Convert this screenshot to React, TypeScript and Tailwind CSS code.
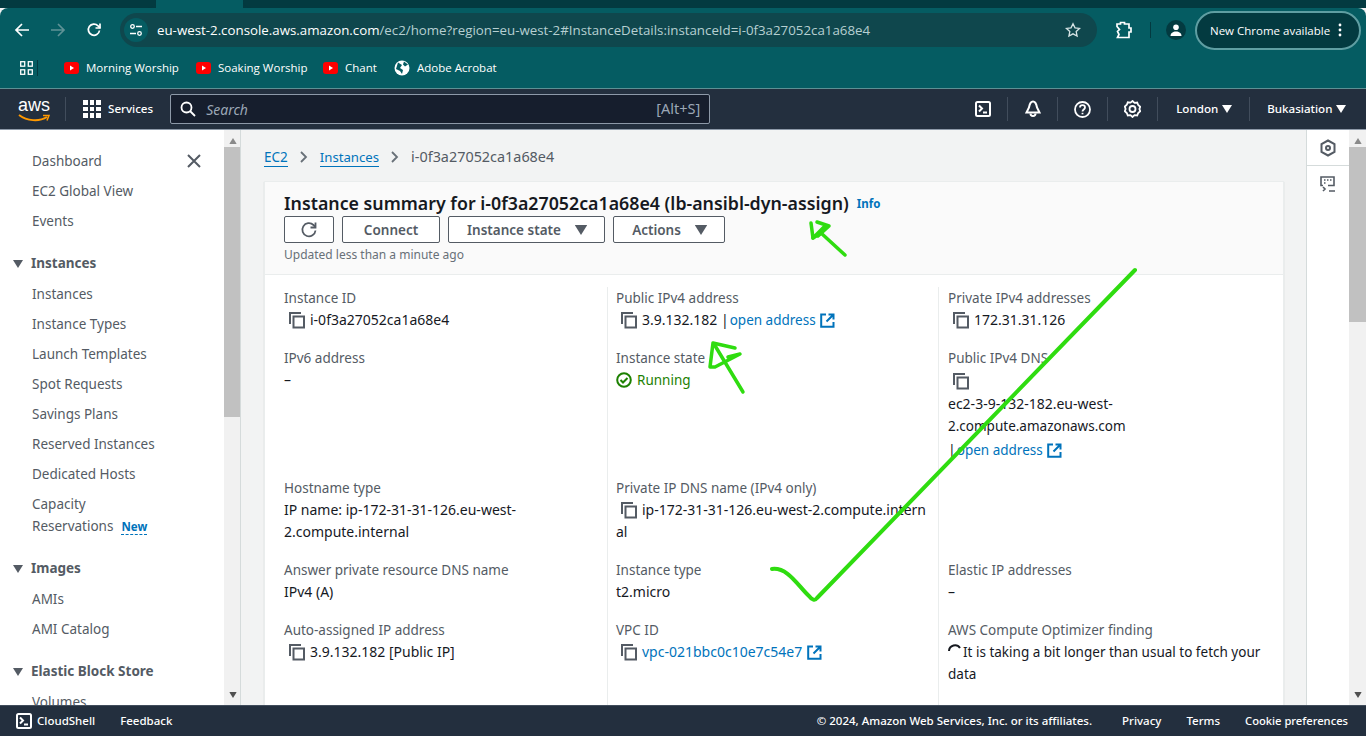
import type { ReactNode } from "react";

const ui = "font-['Noto_Sans','Open_Sans',sans-serif]";
const chrome = "font-['Open_Sans',sans-serif]";

function CopyIcon() {
  return (
    <svg width="18" height="18" viewBox="0 0 18 18" fill="none" stroke="#545b64" strokeWidth="2" className="shrink-0">
      <path d="M2 13V2h11" />
      <rect x="5.5" y="5.5" width="10.5" height="11" />
    </svg>
  );
}

function ExternalIcon() {
  return (
    <svg width="15" height="15" viewBox="0 0 15 15" fill="none" stroke="#0073bb" strokeWidth="2" className="inline-block shrink-0">
      <path d="M6 1.5H1.2v12.3h12.3V9" />
      <path d="M6.5 8.5 13 2M8.5 1.5h5v5" />
    </svg>
  );
}

function Caret({ className = "" }: { className?: string }) {
  return (
    <svg width="10" height="8" viewBox="0 0 10 8" className={className} fill="currentColor">
      <path d="M0 0h10L5 8z" />
    </svg>
  );
}

function YouTube() {
  return (
    <svg width="15" height="12" viewBox="0 0 15 12" className="shrink-0">
      <rect width="15" height="12" rx="3" fill="#f00" />
      <path d="M6 3.500v5l4-2.500z" fill="#fff" />
    </svg>
  );
}

function Bookmark({ label, icon, w }: { label: string; icon: ReactNode; w: string }) {
  return (
    <div className={`flex items-center gap-[7px] ${w}`}>
      {icon}
      <span className="whitespace-nowrap text-[11.5px] text-white">{label}</span>
    </div>
  );
}

function BrowserBar() {
  return (
    <div className={`${chrome} shrink-0`}>
      <div className="flex h-2 bg-[#033a40]">
        <div className="w-[156px] rounded-br-lg bg-[#033a40]" />
        <div className="w-[87px] bg-[#055c62]" />
        <div className="flex-1 rounded-bl-lg bg-[#033a40]" />
      </div>
      <div className="flex h-[44px] items-center rounded-t-lg bg-[#055c62] pl-[14px] pr-1">
        <svg width="16" height="16" viewBox="0 0 16 16" fill="none" stroke="#fff" strokeWidth="1.7" className="mr-5">
          <path d="M15 8H2M8 2 2 8l6 6" />
        </svg>
        <svg width="16" height="16" viewBox="0 0 16 16" fill="none" stroke="#5f9296" strokeWidth="1.7" className="mr-5">
          <path d="M1 8h13M8 2l6 6-6 6" />
        </svg>
        <svg width="16" height="16" viewBox="0 0 16 16" fill="none" stroke="#fff" strokeWidth="1.7" className="mr-[18px]">
          <path d="M13.500 8.500A5.600 5.600 0 1 1 12 3.800L14 6" />
          <path d="M14 1.500V6H9.500" />
        </svg>
        <div className="flex h-[34px] w-[977px] items-center rounded-full bg-[#0f474d] pl-1 pr-4">
          <div className="flex h-[24px] w-[24px] items-center justify-center rounded-full bg-[#055c62]">
            <svg width="14" height="14" viewBox="0 0 14 14" fill="none" stroke="#fff" strokeWidth="1.3">
              <circle cx="3.500" cy="3.500" r="1.800" />
              <circle cx="10.500" cy="10.500" r="1.800" />
              <path d="M7 3.500h6M1 10.500h6" />
            </svg>
          </div>
          <span className="ml-[9px] flex-1 whitespace-nowrap pt-[2px] text-[13.3px] text-[#b6cfd1]">
            <span className="text-white">eu-west-2.console.aws.amazon.com</span>/ec2/home?region=eu-west-2#InstanceDetails:instanceId=i-0f3a27052ca1a68e4
          </span>
          <svg width="16" height="16" viewBox="0 0 24 24" fill="none" stroke="#d5e3e4" strokeWidth="2">
            <path d="m12 2.500 3 6.200 6.800.9-5 4.700 1.300 6.800-6.100-3.300-6.100 3.300 1.300-6.800-5-4.700 6.800-.9z" />
          </svg>
        </div>
        <svg width="18" height="18" viewBox="0 0 18 18" fill="none" stroke="#fff" strokeWidth="1.7" className="ml-[18px]">
          <path d="M2 3h3.500V1.500h4V3H14v4h2v4h-2v5.500H2.500l1.500-3-1.500-3 2-2-2.500-3z" />
        </svg>
        <div className="ml-[17px] h-[16px] w-px bg-[#033a40]" />
        <div className="ml-[15px] flex h-[20px] w-[20px] items-center justify-center rounded-full bg-[#033a40]">
          <svg width="12" height="12" viewBox="0 0 12 12" fill="#fff">
            <circle cx="6" cy="3.300" r="2.800" />
            <path d="M.5 12c0-3 2.500-4.500 5.500-4.500s5.500 1.500 5.500 4.500z" />
          </svg>
        </div>
        <div className="ml-[9px] flex h-[39px] w-[166px] items-center rounded-full border-2 border-[#5f9ea2] bg-[#033a40] pl-[13px]">
          <span className="whitespace-nowrap pt-[2px] text-[11.5px] text-white">New Chrome available</span>
          <svg width="4" height="14" viewBox="0 0 4 14" fill="#fff" className="ml-[8px]">
            <circle cx="2" cy="2" r="1.400" />
            <circle cx="2" cy="7" r="1.400" />
            <circle cx="2" cy="12" r="1.400" />
          </svg>
        </div>
      </div>
      <div className="flex h-[37px] items-center border-b border-[#5d9094] bg-[#055c62] pb-[5px] pl-5">
        <svg width="13" height="14" viewBox="0 0 13 14" fill="none" stroke="#fff" strokeWidth="1.300">
          <rect x=".7" y=".7" width="4" height="4.500" />
          <rect x="8.300" y=".7" width="4" height="4.500" />
          <rect x=".7" y="8.800" width="4" height="4.500" />
          <rect x="8.300" y="8.800" width="4" height="4.500" />
        </svg>
        <div className="ml-[4px] mr-[26px] h-[16px] w-px bg-[#033a40]" />
        <div className="flex items-center">
          <Bookmark label="Morning Worship" icon={<YouTube />} w="w-[132px]" />
          <Bookmark label="Soaking Worship" icon={<YouTube />} w="w-[127px]" />
          <Bookmark label="Chant" icon={<YouTube />} w="w-[71px]" />
          <Bookmark
            label="Adobe Acrobat"
            w="w-[120px]"
            icon={
              <svg width="16" height="16" viewBox="0 0 16 16" className="shrink-0">
                <circle cx="8" cy="8" r="7.500" fill="#fff" />
                <path d="M4 2.500 8 5 6 8l3 2-1 4-2-3-4-2zM10 1.500l4 3-3 2-2-2z" fill="#055c62" />
              </svg>
            }
          />
        </div>
      </div>
    </div>
  );
}

function NavDivider() {
  return <div className="h-[24px] w-px bg-[#414d5c]" />;
}

function NavIcon({ children }: { children: ReactNode }) {
  return <div className="flex w-[49px] justify-center">{children}</div>;
}

function AwsNav() {
  return (
    <div className={`${ui} flex h-[41px] shrink-0 items-center border-b border-[#8d99a8] bg-[#232f3e] text-white`}>
      <div className="relative ml-[18px] h-[30px] w-[32px]">
        <span className="absolute left-0 top-[-1px] font-['Liberation_Sans',sans-serif] text-[18px] leading-[24px]">aws</span>
        <svg width="32" height="9" viewBox="0 0 32 9" fill="none" className="absolute left-0 top-[20px]">
          <path d="M1 1c8 6 20 7 28 2" stroke="#ff9900" strokeWidth="2" />
          <path d="M25 1.500h6l-2 5" stroke="#ff9900" strokeWidth="1.500" />
        </svg>
      </div>
      <div className="ml-[15px] h-[24px] w-px bg-[#414d5c]" />
      <div className="ml-[17px] grid h-[18px] w-[18px] grid-cols-3 gap-[2px]">
        {Array.from({ length: 9 }).map((_, i) => (
          <div key={i} className="bg-white" />
        ))}
      </div>
      <span className="ml-[7px] text-[11.6px] font-medium">Services</span>
      <div className="ml-[17px] flex h-[30px] w-[540px] items-center rounded-[2px] border border-[#8d99a8] bg-[#161e2d] pl-[9px] pr-[9px]">
        <svg width="16" height="16" viewBox="0 0 16 16" fill="none" stroke="#fff" strokeWidth="1.800">
          <circle cx="6.500" cy="6.500" r="5" />
          <path d="m10 10 5 5" />
        </svg>
        <span className="ml-[10px] flex-1 text-[14px] italic text-[#9ba7b6]">Search</span>
        <span className="text-[14.5px] text-[#9ba7b6]">[Alt+S]</span>
      </div>
      <div className="ml-[248px] flex items-center">
        <NavIcon>
          <svg width="16" height="16" viewBox="0 0 16 16" fill="none" stroke="#fff" strokeWidth="2">
            <rect x="1" y="1" width="14" height="14" rx="1.500" />
            <path d="m4 4.500 3 3-3 3M8 11.500h4" />
          </svg>
        </NavIcon>
        <NavDivider />
        <NavIcon>
          <svg width="18" height="18" viewBox="0 0 18 18" fill="none" stroke="#fff" strokeWidth="2">
            <path d="M9 1.500c3 0 3.500 3.500 4 6l2.500 5h-13l2.500-5c.5-2.500 1-6 4-6z" />
            <path d="M6.500 13.500a2.500 2.500 0 0 0 5 0" />
          </svg>
        </NavIcon>
        <NavDivider />
        <NavIcon>
          <svg width="17" height="17" viewBox="0 0 17 17" fill="none" stroke="#fff" strokeWidth="1.800">
            <circle cx="8.500" cy="8.500" r="7.500" />
            <path d="M6 6.500C6 5 7 4.200 8.500 4.200S11 5.200 11 6.500c0 2-2.500 2-2.500 4" />
            <path d="M8.500 11.800v1.500" />
          </svg>
        </NavIcon>
        <NavDivider />
        <NavIcon>
          <svg width="17" height="18" viewBox="0 0 17 18" fill="none" stroke="#fff" strokeWidth="1.800">
            <path d="m8.500 1 2 1.800 2.700-.3 1 2.500 2 1.700-.8 2.300.8 2.300-2 1.700-1 2.500-2.700-.3-2 1.800-2-1.800-2.700.3-1-2.500-2-1.700.8-2.300L.8 6.500l2-1.700 1-2.500 2.700.3z" />
            <circle cx="8.500" cy="9" r="3" />
          </svg>
        </NavIcon>
        <NavDivider />
        <div className="flex w-[91px] items-center pl-[18px]">
          <span className="text-[11.6px] font-medium">London</span>
          <Caret className="ml-[4px]" />
        </div>
        <NavDivider />
        <div className="flex items-center pl-[17px]">
          <span className="text-[11.6px] font-medium">Bukasiation</span>
          <Caret className="ml-[4px]" />
        </div>
      </div>
    </div>
  );
}

function ScrollBar({ thumbTop, thumbH, className = "" }: { thumbTop: string; thumbH: string; className?: string }) {
  return (
    <div className={`relative shrink-0 bg-[#f1f1f1] ${className}`}>
      <Caret className="absolute left-[4px] top-[7px] rotate-180 scale-75 text-[#8a8a8a]" />
      <div className={`absolute inset-x-0 bg-[#c1c1c1] ${thumbTop} ${thumbH}`} />
      <Caret className="absolute bottom-[6px] left-[4px] scale-75 text-[#505050]" />
    </div>
  );
}

function SideItem({ children }: { children: ReactNode }) {
  return <div className="flex h-[30px] items-center pl-8 text-[13.5px] text-[#545b64]">{children}</div>;
}

function SideSection({ title, items }: { title: string; items: string[] }) {
  return (
    <div className="mt-3">
      <div className="flex h-[31px] items-center pl-[13px] text-[13.5px] font-bold text-[#545b64]">
        <Caret className="mr-[8px] text-[#545b64]" />
        {title}
      </div>
      {items.map((item) => (
        <SideItem key={item}>{item}</SideItem>
      ))}
    </div>
  );
}

function Sidebar() {
  return (
    <div className="relative w-[224px] shrink-0 overflow-hidden bg-white pt-4">
      <SideItem>Dashboard</SideItem>
      <SideItem>EC2 Global View</SideItem>
      <SideItem>Events</SideItem>
      <svg width="14" height="14" viewBox="0 0 14 14" fill="none" stroke="#545b64" strokeWidth="2" className="absolute left-[187px] top-[24px]">
        <path d="m1 1 12 12M13 1 1 13" />
      </svg>
      <SideSection
        title="Instances"
        items={["Instances", "Instance Types", "Launch Templates", "Spot Requests", "Savings Plans", "Reserved Instances", "Dedicated Hosts"]}
      />
      <div className="pb-[3px] pl-8 pt-[4px] text-[13.5px] leading-[22px] text-[#545b64]">
        <div>Capacity</div>
        <div>
          Reservations
          <span className="ml-[8px] border-b border-dashed border-[#0073bb] text-[11.5px] font-bold text-[#0073bb]">New</span>
        </div>
      </div>
      <SideSection title="Images" items={["AMIs", "AMI Catalog"]} />
      <SideSection title="Elastic Block Store" items={["Volumes"]} />
    </div>
  );
}

function Field({ label, children }: { label: string; children: ReactNode }) {
  return (
    <>
      <div className="text-[13.5px] leading-[22px] text-[#545b64]">{label}</div>
      <div className="text-[14px] leading-[22px] text-[#16191f]">{children}</div>
    </>
  );
}

function CopyValue({ children }: { children: ReactNode }) {
  return (
    <div className="flex items-center">
      <span className="ml-[4px] mr-[4px] flex h-[22px] items-center">
        <CopyIcon />
      </span>
      <span className="whitespace-nowrap">{children}</span>
    </div>
  );
}

function Cell({ children, last = false, first = false, className = "" }: { children?: ReactNode; last?: boolean; first?: boolean; className?: string }) {
  return (
    <div className={`${first ? "pl-[19px]" : last ? "pl-[9px]" : "pl-2"} ${last ? "" : "border-r border-[#eaeded]"} ${className}`}>
      {children}
    </div>
  );
}

function Link({ children }: { children: ReactNode }) {
  return <span className="ml-[1px] text-[13.5px] text-[#0073bb]">{children}</span>;
}

function ActionButton({ children, className = "" }: { children: ReactNode; className?: string }) {
  return (
    <div className={`flex h-[27px] items-center justify-center rounded-[2px] border border-[#545b64] bg-white pt-[1px] text-[13.5px] font-semibold text-[#545b64] ${className}`}>
      {children}
    </div>
  );
}

function Summary() {
  return (
    <div className="border border-[#eaeded] bg-white shadow-[0_1px_1px_0_rgba(0,28,36,0.2)]">
      <div className="h-[93px] border-b border-[#eaeded] bg-[#fafafa] pl-[19px] pt-[9px]">
        <div className="flex items-center">
          <span className="whitespace-nowrap text-[17.8px] font-semibold leading-[24px] text-[#16191f]">
            Instance summary for i-0f3a27052ca1a68e4 (lb-ansibl-dyn-assign)
          </span>
          <span className="ml-[8px] mt-[2px] text-[11.5px] font-bold text-[#0073bb]">Info</span>
        </div>
        <div className="mt-[1px] flex gap-2">
          <ActionButton className="w-[50px]">
            <svg width="18" height="18" viewBox="0 0 18 18" fill="none" stroke="#545b64" strokeWidth="1.800">
              <path d="M15.500 9.500A6.600 6.600 0 1 1 13.500 4L15.500 6" />
              <path d="M15.500 1.500V6.500H10.500" />
            </svg>
          </ActionButton>
          <ActionButton className="w-[98px]">Connect</ActionButton>
          <ActionButton className="w-[157px]">
            Instance state
            <Caret className="ml-[15px] scale-125" />
          </ActionButton>
          <ActionButton className="w-[112px]">
            Actions
            <Caret className="ml-[15px] scale-125" />
          </ActionButton>
        </div>
        <div className="mt-[3px] text-[12px] leading-[18px] text-[#687078]">Updated less than a minute ago</div>
      </div>
      <div className="grid grid-cols-[343px_331px_1fr] pt-3">
        <Cell first className="h-[60px]">
          <Field label="Instance ID">
            <CopyValue>i-0f3a27052ca1a68e4</CopyValue>
          </Field>
        </Cell>
        <Cell className="h-[60px]">
          <Field label="Public IPv4 address">
            <div className="flex items-center">
              <span className="ml-[4px] mr-[4px] flex h-[22px] items-center">
                <CopyIcon />
              </span>
              <span className="whitespace-nowrap">
                3.9.132.182 |<Link>open address</Link>
              </span>
              <span className="ml-[4px] flex items-center">
                <ExternalIcon />
              </span>
            </div>
          </Field>
        </Cell>
        <Cell last className="h-[60px]">
          <Field label="Private IPv4 addresses">
            <CopyValue>172.31.31.126</CopyValue>
          </Field>
        </Cell>

        <Cell first className="h-[130px]">
          <Field label="IPv6 address">–</Field>
        </Cell>
        <Cell className="h-[130px]">
          <div className="text-[13.5px] leading-[22px] text-[#545b64]">Instance state</div>
          <div className="flex items-center gap-[5px] text-[13.5px] leading-[22px] text-[#1d8102]">
            <svg width="16" height="16" viewBox="0 0 16 16" fill="none" stroke="#1d8102" strokeWidth="2">
              <circle cx="8" cy="8" r="6.800" />
              <path d="m4.500 8 2.500 2.500 4.500-4.500" />
            </svg>
            Running
          </div>
        </Cell>
        <Cell last className="h-[130px]">
          <div className="text-[13.5px] leading-[22px] text-[#545b64]">Public IPv4 DNS</div>
          <div className="ml-[4px] flex h-[24px] items-center">
            <CopyIcon />
          </div>
          <div className="text-[14px] leading-[22px] text-[#16191f]">ec2-3-9-132-182.eu-west-</div>
          <div className="text-[13.5px] leading-[22px] text-[#16191f]">2.compute.amazonaws.com</div>
          <div className="mt-[2px] flex items-center gap-[4px] text-[14px] leading-[22px] text-[#16191f]">
            <span>
              |<Link>open address</Link>
            </span>
            <ExternalIcon />
          </div>
        </Cell>

        <Cell first className="h-[82px]">
          <Field label="Hostname type">
            <div className="w-[260px]">IP name: ip-172-31-31-126.eu-west-2.compute.internal</div>
          </Field>
        </Cell>
        <Cell className="h-[82px]">
          <div className="text-[13.5px] leading-[22px] text-[#545b64]">Private IP DNS name (IPv4 only)</div>
          <div className="text-[14px] leading-[22px] text-[#16191f]">
            <CopyValue>ip-172-31-31-126.eu-west-2.compute.intern</CopyValue>
            al
          </div>
        </Cell>
        <Cell last className="h-[82px]" />

        <Cell first className="h-[60px]">
          <Field label="Answer private resource DNS name">IPv4 (A)</Field>
        </Cell>
        <Cell className="h-[60px]">
          <Field label="Instance type">t2.micro</Field>
        </Cell>
        <Cell last className="h-[60px]">
          <Field label="Elastic IP addresses">–</Field>
        </Cell>

        <Cell first className="h-[100px]">
          <Field label="Auto-assigned IP address">
            <CopyValue>3.9.132.182 [Public IP]</CopyValue>
          </Field>
        </Cell>
        <Cell className="h-[100px]">
          <Field label="VPC ID">
            <CopyValue>
              <span className="inline-flex items-center gap-[5px]">
                <span className="text-[14px] text-[#0073bb]">vpc-021bbc0c10e7c54e7</span>
                <ExternalIcon />
              </span>
            </CopyValue>
          </Field>
        </Cell>
        <Cell last className="h-[100px]">
          <div className="text-[13.5px] leading-[22px] text-[#545b64]">AWS Compute Optimizer finding</div>
          <div className="w-[320px] text-[13.5px] leading-[22px] text-[#16191f]">
            <svg width="15" height="14" viewBox="0 0 15 14" fill="none" stroke="#16191f" strokeWidth="2" className="inline-block align-[-1px]">
              <path d="M1 7a6 6 0 0 1 11-3" />
            </svg>
            It is taking a bit longer than usual to fetch your data
          </div>
        </Cell>
      </div>
    </div>
  );
}

function RightRail() {
  return (
    <div className="w-[43px] shrink-0 border-l border-[#d5dbdb] bg-white">
      <div className="flex h-[36px] items-center justify-center border-b border-[#d5dbdb]">
        <svg width="16" height="18" viewBox="0 0 16 18" fill="none" stroke="#545b64" strokeWidth="2">
          <path d="M8 1.500 14.500 5v8L8 16.500 1.500 13V5z" />
          <circle cx="8" cy="9" r="2" />
        </svg>
      </div>
      <div className="flex h-[36px] items-center justify-center">
        <svg width="16" height="16" viewBox="0 0 16 16" fill="none" stroke="#545b64" strokeWidth="1.600">
          <path d="M3 9.500H1V1h13v8.500H8" />
          <path d="M4 4h1.500M7 4h1.500M10 4h1.500M4 7h1.500" />
          <path d="m3 11 2 2-2 2M9 15h6" />
        </svg>
      </div>
    </div>
  );
}

function Footer() {
  return (
    <div className={`${ui} flex h-[31px] shrink-0 items-center border-t border-[#414d5c] bg-[#232f3e] pl-4 text-[11.5px] font-medium text-white`}>
      <svg width="16" height="16" viewBox="0 0 16 16" fill="none" stroke="#fff" strokeWidth="2">
        <rect x="1" y="1" width="14" height="14" rx="1.500" />
        <path d="m4 4.500 3 3-3 3M8 11.500h4" />
      </svg>
      <span className="ml-[5px]">CloudShell</span>
      <span className="ml-[25px]">Feedback</span>
      <span className="ml-auto">© 2024, Amazon Web Services, Inc. or its affiliates.</span>
      <span className="ml-[30px]">Privacy</span>
      <span className="ml-[25px]">Terms</span>
      <span className="ml-[25px] mr-[18px] text-[11.2px]">Cookie preferences</span>
    </div>
  );
}

function Annotations() {
  return (
    <svg width="1366" height="736" viewBox="0 0 1366 736" fill="none" stroke="#2fdc10" strokeWidth="3.5" strokeLinecap="round" strokeLinejoin="round" className="pointer-events-none absolute left-0 top-0">
      <path d="M811 223l2 15 13-13M817 222l12 4-11 10" />
      <path d="M813 238l8-5 24 22" />
      <path d="M743 392 714 344" />
      <path d="M735 348l-22-5-3 24h5l25-13-12 3" />
      <path d="M772 569c16-2 26 17 37 27 3 4 6 5 8 2L1135 270" strokeWidth="4" />
    </svg>
  );
}

export default function App() {
  return (
    <div className="relative flex h-[736px] w-[1366px] flex-col overflow-hidden bg-[#f2f3f3]">
      <BrowserBar />
      <AwsNav />
      <div className={`${ui} flex min-h-0 flex-1`}>
        <Sidebar />
        <ScrollBar thumbTop="top-[17px]" thumbH="h-[270px]" className="w-[16px]" />
        <div className="min-w-0 flex-1 overflow-hidden border-l border-[#d5dbdb] pl-[23px] pr-[22px] pt-4">
          <div className="mb-[13px] flex h-[22px] items-center">
            <span className="border-b border-[#0073bb] text-[13.5px] leading-[18px] text-[#0073bb]">EC2</span>
            <svg width="8" height="12" viewBox="0 0 8 12" fill="none" stroke="#687078" strokeWidth="1.800" className="mx-[12px]">
              <path d="m1 1 5 5-5 5" />
            </svg>
            <span className="border-b border-[#0073bb] text-[13.2px] leading-[18px] text-[#0073bb]">Instances</span>
            <svg width="8" height="12" viewBox="0 0 8 12" fill="none" stroke="#687078" strokeWidth="1.800" className="mx-[12px]">
              <path d="m1 1 5 5-5 5" />
            </svg>
            <span className="text-[14.4px] text-[#545b64]">i-0f3a27052ca1a68e4</span>
          </div>
          <Summary />
        </div>
        <RightRail />
        <ScrollBar thumbTop="top-[17px]" thumbH="h-[175px]" className="w-[17px]" />
      </div>
      <Footer />
      <Annotations />
    </div>
  );
}
